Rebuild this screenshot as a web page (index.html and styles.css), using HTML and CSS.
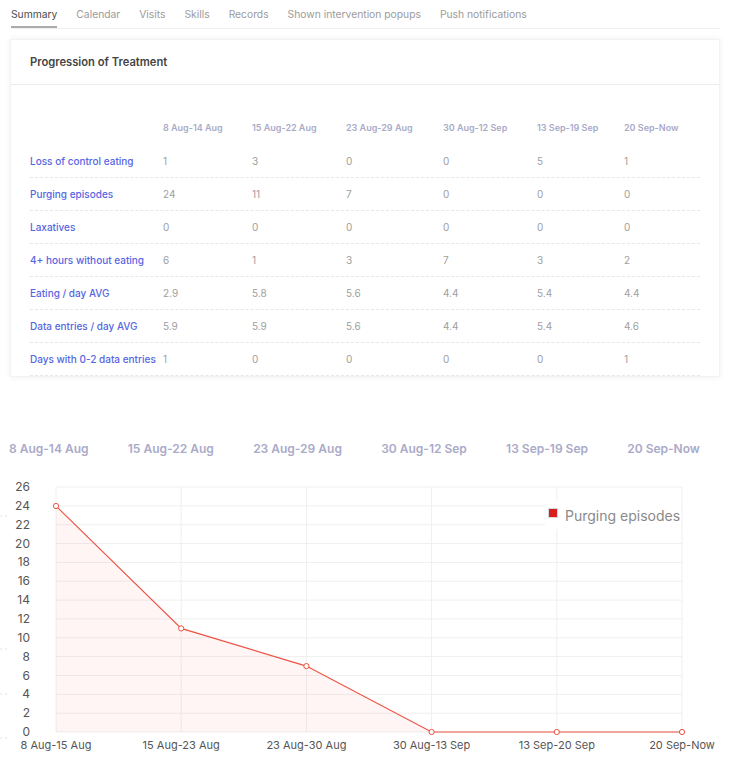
FILE: index.html
```html
<!DOCTYPE html>
<html lang="en">
<head>
<meta charset="utf-8">
<title>Summary</title>
<link rel="stylesheet" href="styles.css">
</head>
<body>
<nav class="tabs">
  <span class="tab active">Summary</span>
  <span class="tab">Calendar</span>
  <span class="tab">Visits</span>
  <span class="tab">Skills</span>
  <span class="tab">Records</span>
  <span class="tab">Shown intervention popups</span>
  <span class="tab">Push notifications</span>
</nav>

<section class="card">
  <header class="card-header">Progression of Treatment</header>
  <div class="table">
    <div class="row head">
      <span></span><span>8 Aug-14 Aug</span><span>15 Aug-22 Aug</span><span>23 Aug-29 Aug</span><span>30 Aug-12 Sep</span><span>13 Sep-19 Sep</span><span>20 Sep-Now</span>
    </div>
    <div class="row"><span class="label">Loss of control eating</span><span>1</span><span>3</span><span>0</span><span>0</span><span>5</span><span>1</span></div>
    <div class="row"><span class="label">Purging episodes</span><span>24</span><span>11</span><span>7</span><span>0</span><span>0</span><span>0</span></div>
    <div class="row"><span class="label">Laxatives</span><span>0</span><span>0</span><span>0</span><span>0</span><span>0</span><span>0</span></div>
    <div class="row"><span class="label">4+ hours without eating</span><span>6</span><span>1</span><span>3</span><span>7</span><span>3</span><span>2</span></div>
    <div class="row"><span class="label">Eating / day AVG</span><span>2.9</span><span>5.8</span><span>5.6</span><span>4.4</span><span>5.4</span><span>4.4</span></div>
    <div class="row"><span class="label">Data entries / day AVG</span><span>5.9</span><span>5.9</span><span>5.6</span><span>4.4</span><span>5.4</span><span>4.6</span></div>
    <div class="row"><span class="label">Days with 0-2 data entries</span><span>1</span><span>0</span><span>0</span><span>0</span><span>0</span><span>1</span></div>
  </div>
</section>

<div class="ranges">
  <span>8 Aug-14 Aug</span><span>15 Aug-22 Aug</span><span>23 Aug-29 Aug</span><span>30 Aug-12 Sep</span><span>13 Sep-19 Sep</span><span>20 Sep-Now</span>
</div>

<svg class="chart" width="730" height="289" viewBox="0 470 730 289" xmlns="http://www.w3.org/2000/svg">
  <g class="marks">
    <line x1="0" y1="515" x2="8" y2="515"/>
    <line x1="0" y1="648" x2="8" y2="648"/>
    <line x1="0" y1="693" x2="8" y2="693"/>
    <line x1="0" y1="737" x2="8" y2="737"/>
  </g>
  <g class="grid">
    <line x1="56" y1="486" x2="682" y2="486"/>
    <line x1="56" y1="504.8" x2="682" y2="504.8"/>
    <line x1="56" y1="523.7" x2="682" y2="523.7"/>
    <line x1="56" y1="542.5" x2="682" y2="542.5"/>
    <line x1="56" y1="561.4" x2="682" y2="561.4"/>
    <line x1="56" y1="580.2" x2="682" y2="580.2"/>
    <line x1="56" y1="599.1" x2="682" y2="599.1"/>
    <line x1="56" y1="617.9" x2="682" y2="617.9"/>
    <line x1="56" y1="636.8" x2="682" y2="636.8"/>
    <line x1="56" y1="655.6" x2="682" y2="655.6"/>
    <line x1="56" y1="674.5" x2="682" y2="674.5"/>
    <line x1="56" y1="693.3" x2="682" y2="693.3"/>
    <line x1="56" y1="712.2" x2="682" y2="712.2"/>
    <line x1="56" y1="731" x2="682" y2="731"/>
    <line x1="56" y1="486" x2="56" y2="731"/>
    <line x1="181.2" y1="486" x2="181.2" y2="731"/>
    <line x1="306.4" y1="486" x2="306.4" y2="731"/>
    <line x1="431.6" y1="486" x2="431.6" y2="731"/>
    <line x1="556.8" y1="486" x2="556.8" y2="731"/>
    <line x1="682" y1="486" x2="682" y2="731"/>
  </g>
  <g class="ylabels">
    <text x="30" y="490">26</text>
    <text x="30" y="509">24</text>
    <text x="30" y="528">22</text>
    <text x="30" y="547">20</text>
    <text x="30" y="565">18</text>
    <text x="30" y="584">16</text>
    <text x="30" y="603">14</text>
    <text x="30" y="622">12</text>
    <text x="30" y="641">10</text>
    <text x="30" y="660">8</text>
    <text x="30" y="679">6</text>
    <text x="30" y="697">4</text>
    <text x="30" y="716">2</text>
    <text x="30" y="735">0</text>
  </g>
  <polygon class="area" points="56,731 56,505 181.2,627.4 306.4,665.1 431.6,731"/>
  <polyline class="line" points="56,505 181.2,627.4 306.4,665.1 431.6,731 556.8,731 682,731"/>
  <g class="dots">
    <circle cx="56" cy="505" r="2.6"/>
    <circle cx="181.2" cy="627.4" r="2.6"/>
    <circle cx="306.4" cy="665.1" r="2.6"/>
    <circle cx="431.6" cy="731" r="2.6"/>
    <circle cx="556.8" cy="731" r="2.6"/>
    <circle cx="682" cy="731" r="2.6"/>
  </g>
  <g class="xlabels">
    <text x="56" y="748">8 Aug-15 Aug</text>
    <text x="181.2" y="748">15 Aug-23 Aug</text>
    <text x="306.4" y="748">23 Aug-30 Aug</text>
    <text x="431.6" y="748">30 Aug-13 Sep</text>
    <text x="556.8" y="748">13 Sep-20 Sep</text>
    <text x="682" y="748">20 Sep-Now</text>
  </g>
  <g class="legend">
    <rect class="legend-bg" x="545" y="500" width="136" height="28"/>
    <rect class="legend-box" x="548.5" y="507.5" width="9" height="9"/>
    <text x="565" y="520">Purging episodes</text>
  </g>
</svg>
</body>
</html>
```

FILE: styles.css
```css
html, body {
  margin: 0;
  padding: 0;
  background: #ffffff;
}

body {
  font-family: "Inter", "Liberation Sans", sans-serif;
  width: 730px;
  height: 759px;
  overflow: hidden;
}

.tabs {
  display: flex;
  gap: 19px;
  margin: 0 10px 0 11px;
  height: 28px;
  align-items: flex-start;
  border-bottom: 1px solid #f0f0f0;
}

.tab {
  font-size: 10.3px;
  color: #9b9b9b;
  padding-top: 7px;
  height: 19px;
  line-height: 14px;
}

.tab.active {
  color: #4a4a4a;
  border-bottom: 2px solid #ababab;
}

.card {
  margin: 10px 10px 0 10px;
  background: #fff;
  box-shadow: 0 0 6px rgba(0, 0, 0, 0.07);
  border: 1px solid #f3f3f3;
}

.card-header {
  height: 44px;
  line-height: 44px;
  padding-left: 19px;
  font-size: 11.2px;
  font-weight: 600;
  color: #444;
  border-bottom: 1px solid #ececec;
}

.table {
  padding: 25px 19px 0 19px;
}

.row {
  display: grid;
  grid-template-columns: 133px 89px 94px 97px 94px 87px 1fr;
  height: 32px;
  align-items: center;
  border-bottom: 1px dashed #e6e6ee;
  font-size: 10px;
  color: #9e9e9e;
}

.row.head {
  height: 35px;
  border-bottom: none;
  font-size: 9px;
  font-weight: 600;
  color: #aaaac9;
}

.row .label {
  font-size: 10px;
  font-weight: 500;
  color: #5665e2;
  white-space: nowrap;
}

.ranges {
  display: flex;
  justify-content: space-between;
  margin: 64px 30px 0 9px;
  font-size: 12px;
  font-weight: 600;
  color: #aaaac9;
  height: 16px;
  line-height: 16px;
}

.chart {
  display: block;
  margin-top: 14px;
}

.marks line {
  stroke: #e2e2e2;
  stroke-width: 1;
  stroke-dasharray: 2 3;
}

.grid line {
  stroke: #efefef;
  stroke-width: 1;
}

.ylabels text {
  font-family: "Inter", "Liberation Sans", sans-serif;
  font-size: 12px;
  fill: #555;
  text-anchor: end;
}

.xlabels text {
  font-family: "Inter", "Liberation Sans", sans-serif;
  font-size: 11px;
  fill: #555;
  text-anchor: middle;
}

.area {
  fill: rgba(235, 90, 70, 0.06);
  stroke: none;
}

.line {
  fill: none;
  stroke: #ec5242;
  stroke-width: 1.1;
}

.dots circle {
  fill: #fff;
  stroke: #ec5242;
  stroke-width: 1;
}

.legend-bg {
  fill: #fff;
}

.legend-box {
  fill: #d81e1e;
  stroke: #d9d9d9;
  stroke-width: 1;
}

.legend text {
  font-family: "Inter", "Liberation Sans", sans-serif;
  font-size: 14px;
  fill: #8a8a8a;
}
```
